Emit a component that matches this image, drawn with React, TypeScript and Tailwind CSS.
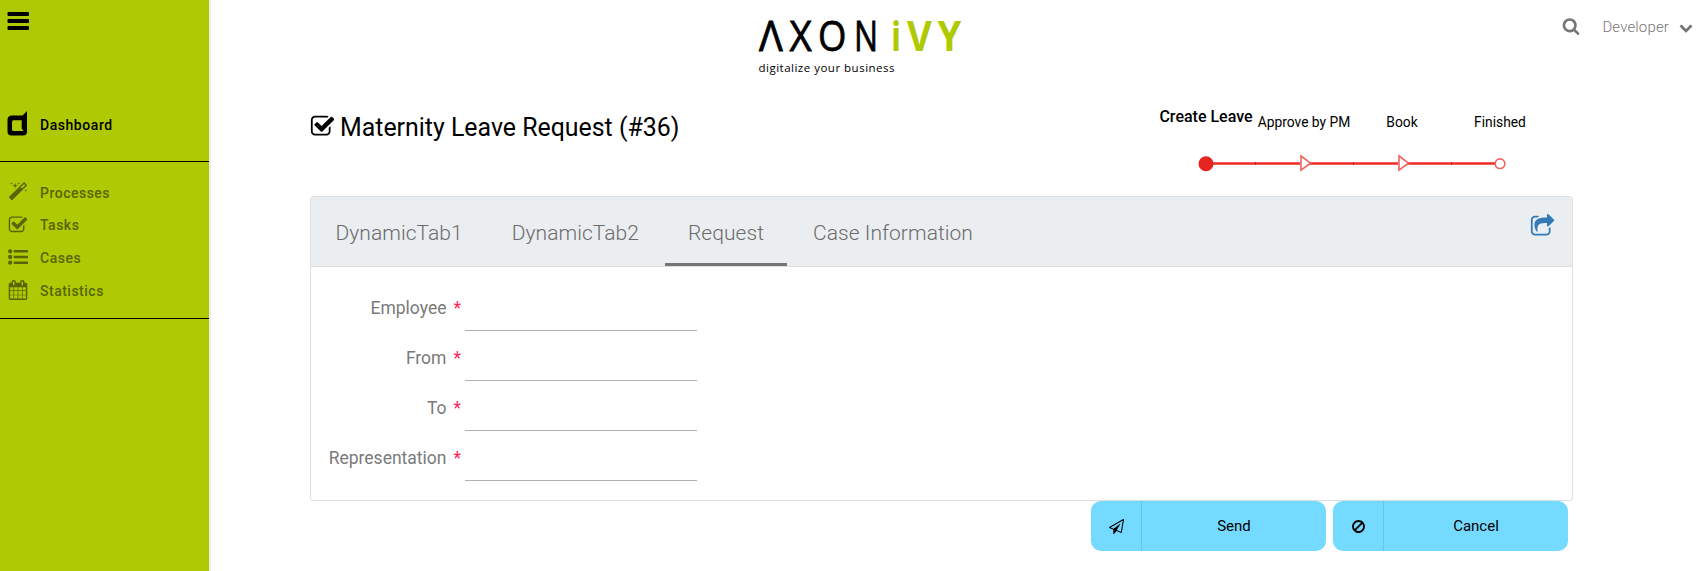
import React from "react";

const PATHS = {
  check:
    "M1472 930v318q0 119-84.5 203.5t-203.5 84.5h-832q-119 0-203.5-84.5t-84.5-203.5v-832q0-119 84.5-203.5t203.5-84.5h832q63 0 117 25 15 7 18 23 3 17-9 29l-49 49q-10 10-23 10-3 0-9-2-23-6-45-6h-832q-66 0-113 47t-47 113v832q0 66 47 113t113 47h832q66 0 113-47t47-113v-254q0-13 9-22l64-64q10-10 23-10 6 0 12 3 20 8 20 29zm231-489l-814 814q-24 24-57 24t-57-24l-430-430q-24-24-24-57t24-57l110-110q24-24 57-24t57 24l263 263 647-647q24-24 57-24t57 24l110 110q24 24 24 57t-24 57z",
  magic:
    "M1254 581l293-293-107-107-293 293zm447-293q0 27-18 45l-1286 1286q-18 18-45 18t-45-18l-198-198q-18-18-18-45t18-45l1286-1286q18-18 45-18t45 18l198 198q18 18 18 45zm-1351-190l98 30-98 30-30 98-30-98-98-30 98-30 30-98zm350 162l196 60-196 60-60 196-60-196-196-60 196-60 60-196zm930 478l98 30-98 30-30 98-30-98-98-30 98-30 30-98zm-640-640l98 30-98 30-30 98-30-98-98-30 98-30 30-98z",
  list:
    "M0 1408a192 192 0 1 0 384 0a192 192 0 1 0-384 0zM0 896a192 192 0 1 0 384 0a192 192 0 1 0-384 0zM0 384a192 192 0 1 0 384 0a192 192 0 1 0-384 0zM512 1292h1280v232h-1280zM512 780h1280v232h-1280zM512 268h1280v232h-1280z",
  calendar:
    "M192 1664h288v-288h-288v288zm352 0h320v-288h-320v288zm-352-352h288v-320h-288v320zm352 0h320v-320h-320v320zm-352-384h288v-288h-288v288zm736 736h320v-288h-320v288zm-384-736h320v-288h-320v288zm768 736h288v-288h-288v288zm-384-352h320v-320h-320v320zm-352-864v-288q0-13-9.5-22.5t-22.5-9.5h-64q-13 0-22.5 9.5t-9.5 22.5v288q0 13 9.5 22.5t22.5 9.5h64q13 0 22.5-9.5t9.5-22.5zm736 864h288v-320h-288v320zm-384-384h320v-288h-320v288zm384 0h288v-288h-288v288zm32-480v-288q0-13-9.5-22.5t-22.5-9.5h-64q-13 0-22.5 9.5t-9.5 22.5v288q0 13 9.5 22.5t22.5 9.5h64q13 0 22.5-9.5t9.5-22.5zm384-64v1280q0 52-38 90t-90 38h-1408q-52 0-90-38t-38-90v-1280q0-52 38-90t90-38h128v-96q0-66 47-113t113-47h64q66 0 113 47t47 113v96h384v-96q0-66 47-113t113-47h64q66 0 113 47t47 113v96h128q52 0 90 38t38 90z",
  plane:
    "M1764 11q33 24 27 64l-256 1536q-5 29-32 45-14 8-31 8-11 0-24-5l-527-215-298 327q-18 21-47 21-14 0-23-4-19-7-30-23.5t-11-36.5v-452l-472-193q-37-14-40-55-3-39 32-59l1664-960q35-21 68 2zm-342 1499l221-1323-1434 827 336 137 863-639-478 797z",
  ban: "M1440 893q0-161-87-295l-754 753q137 89 297 89 111 0 211.5-43.5t173.5-116.5 116-174.5 43-212.5zm-999 299l755-754q-135-91-300-91-148 0-273 73t-198 199-73 274q0 162 89 299zm1223-299q0 157-61 300t-163.5 246-245 164-298.5 61-298.5-61-245-164-163.5-246-61-300 61-299.5 163.5-245.5 245-164 298.5-61 298.5 61 245 164 163.5 245.5 61 299.5z",
  search:
    "M1216 832q0-185-131.5-316.5t-316.5-131.5-316.5 131.5-131.5 316.5 131.5 316.5 316.5 131.5 316.5-131.5 131.5-316.5zm512 832q0 52-38 90t-90 38q-54 0-90-38l-343-342q-179 124-399 124-143 0-273.5-55.5t-225-150-150-225-55.5-273.5 55.5-273.5 150-225 225-150 273.5-55.5 273.5 55.5 225 150 150 225 55.5 273.5q0 220-124 399l343 343q37 37 37 90z",
  share:
    "M1472 989v259q0 119-84.5 203.5t-203.5 84.5h-832q-119 0-203.5-84.5t-84.5-203.5v-832q0-119 84.5-203.5t203.5-84.5h255q13 0 22.5 9.5t9.5 22.5q0 27-26 32-77 26-133 60-10 4-16 4h-112q-66 0-113 47t-47 113v832q0 66 47 113t113 47h832q66 0 113-47t47-113v-214q0-19 18-29 28-13 54-37 16-16 35-8 21 9 21 31zm237-496l-384 384q-18 19-45 19-12 0-25-5-39-17-39-59v-192h-160q-323 0-438 131-119 137-74 473 3 23-20 34-8 2-12 2-16 0-26-13-10-14-21-31t-39.5-68.5-49.5-99.5-38.5-114-17.5-122q0-49 3.5-91t14-90 28-88 47-81.5 68.5-74 94.5-61.5 124.5-48.5 159.5-30.5 196.5-11h160v-192q0-42 39-59 13-5 25-5 26 0 45 19l384 384q19 19 19 45t-19 45z",
  chevron:
    "M1683 808l-742 741q-19 19-45 19t-45-19l-742-741q-19-19-19-45.5t19-45.5l166-165q19-19 45-19t45 19l531 531 531-531q19-19 45-19t45 19l166 165q19 19 19 45.5t-19 45.5z",
};

function Icon({ name, className }: { name: keyof typeof PATHS; className: string }) {
  return (
    <svg viewBox="0 0 1792 1792" fill="currentColor" className={`shrink-0 ${className}`} aria-hidden="true">
      <path d={PATHS[name]} />
    </svg>
  );
}

const NAV: { icon: keyof typeof PATHS; label: string }[] = [
  { icon: "magic", label: "Processes" },
  { icon: "check", label: "Tasks" },
  { icon: "list", label: "Cases" },
  { icon: "calendar", label: "Statistics" },
];

function Sidebar() {
  return (
    <aside className="h-full w-[211px] shrink-0 border-r-2 border-[#e9eef1] bg-[#afca05]">
      <div className="flex h-[88px] items-start pt-3 pl-[7px]">
        <svg className="h-[18px] w-[22px]" viewBox="0 0 22 18" aria-hidden="true">
          <rect x="0.5" y="0" width="21.5" height="4" rx="1" />
          <rect x="0.5" y="7" width="21.5" height="4" rx="1" />
          <rect x="0.5" y="14" width="21.5" height="4" rx="1" />
        </svg>
      </div>
      <div className="flex h-[74px] items-center border-b border-black pl-[7px] text-[14px] font-medium tracking-[0.55px] text-black">
        <svg className="mt-[-3px] h-[25px] w-[21px]" viewBox="0 0 21 25" aria-hidden="true">
          <path
            fillRule="evenodd"
            d="M5 4.5H15.5L20 0V20.500Q20 24.500 16 24.500H4.500Q0.500 24.500 0.500 20.500V9Q0.500 4.500 5 4.500ZM6.500 9.200Q5 9.200 5 10.700V18.500Q5 20 6.500 20H16.500L14.700 17.800V9.200Z"
          />
        </svg>
        <span className="mt-0.5 ml-3">Dashboard</span>
      </div>
      <nav className="flex h-[157px] flex-col border-b border-black pt-[15px] text-[14px] font-medium tracking-[0.5px] text-[#586502]">
        {NAV.map((n) => (
          <a key={n.label} className="flex h-[32.6px] items-center pl-2">
            <Icon name={n.icon} className="-mt-0.5 h-5 w-5" />
            <span className="ml-3">{n.label}</span>
          </a>
        ))}
      </nav>
    </aside>
  );
}

function Logo() {
  return (
    <svg
      className="h-[60px] w-[210px] overflow-visible font-['Open_Sans','Noto_Sans',sans-serif]"
      viewBox="0 0 210 60"
    >
      <g fontSize="41.5" stroke="#000" strokeWidth="0.8">
        <text transform="translate(1 35) scale(0.95 1)">Λ</text>
        <text transform="translate(31.5 35) scale(0.93 1)">X</text>
        <text transform="translate(60 35) scale(0.88 1)">O</text>
        <text transform="translate(96 35) scale(0.77 1)">N</text>
      </g>
      <g fontSize="41.5" fontWeight="700" fill="#afca05">
        <text transform="translate(133 35) scale(0.8 1)">i</text>
        <text transform="translate(149 35) scale(0.92 1)">V</text>
        <text transform="translate(179.5 35) scale(0.92 1)">Y</text>
      </g>
      <text x="0.5" y="55.5" fontSize="11.5" textLength="136">
        digitalize your business
      </text>
    </svg>
  );
}

const STEPS = ["Create Leave", "Approve by PM", "Book", "Finished"];

function StepMark({ index }: { index: number }) {
  return (
    <svg className="h-5 w-[98px]" viewBox="0 0 98 20" aria-hidden="true">
      {index > 0 && <path d="M0 10.500H45" stroke="#ee2a24" strokeWidth="2.6" />}
      {index < 3 && <path d="M50 10.500H98" stroke="#ee2a24" strokeWidth="2.6" />}
      {index > 0 && <path d="M0 9V12" stroke="#b5171b" strokeWidth="1.500" />}
      {index === 0 && <circle cx="49" cy="10.700" r="7.500" fill="#e52520" />}
      {(index === 1 || index === 2) && (
        <path d="M46 3L55.500 10.200L46 17.200Z" fill="#fff" stroke="#f0625c" strokeWidth="1.600" />
      )}
      {index === 3 && <circle cx="49" cy="10.700" r="4.800" fill="#fff" stroke="#f0625c" strokeWidth="1.600" />}
    </svg>
  );
}

function Steps() {
  return (
    <ol className="flex">
      {STEPS.map((s, i) => (
        <li key={s} className="flex w-[98px] flex-col items-center text-black">
          <span
            className={
              i === 0
                ? "flex h-[49px] items-start pt-[3px] text-[16px] leading-5 font-medium whitespace-nowrap"
                : "flex h-[49px] items-start pt-2 text-[13.8px] leading-5 whitespace-nowrap"
            }
          >
            {s}
          </span>
          <StepMark index={i} />
        </li>
      ))}
    </ol>
  );
}

const TABS = ["DynamicTab1", "DynamicTab2", "Request", "Case Information"];
const FIELDS = ["Employee", "From", "To", "Representation"];

function Panel() {
  return (
    <section className="h-[305px] w-[1263px] rounded-[3px] border border-[#dcdee0] bg-white">
      <div className="flex h-[70px] justify-between border-b border-[#dcdee0] bg-[#eaeef1]">
        <div className="flex gap-[4px] pl-[2px]">
          {TABS.map((t) => (
            <button
              key={t}
              className={`flex items-center border-b-3 px-[22.5px] pt-[7px] text-[21px] font-light tracking-[0.05px] text-[#6b6b6b] ${
                t === "Request" ? "rounded-t-[2px] border-[#757575]" : "border-transparent"
              }`}
            >
              {t}
            </button>
          ))}
        </div>
        <Icon name="share" className="mt-[17px] mr-[17px] h-[25px] w-[25px] text-[#337ab7]" />
      </div>
      <form className="flex flex-col pt-[14px]">
        {FIELDS.map((f) => (
          <div key={f} className="flex h-[50px]">
            <label className="w-[150px] pt-[15px] text-right text-[17.5px] leading-6 whitespace-nowrap text-[#7a7a7a]">
              {f}
              <span className="ml-[7px] text-[#fb2459]">*</span>
            </label>
            <div className="ml-1 h-[50px] w-[232px] border-b border-[#b0b0b0]" />
          </div>
        ))}
      </form>
    </section>
  );
}

function ActionButton({ icon, label }: { icon: keyof typeof PATHS; label: string }) {
  return (
    <button className="flex h-[50px] w-[235px] rounded-[10px] bg-[#74daff] text-[15px] text-black">
      <span className="flex h-full w-[51px] items-center justify-center border-r border-[#67c4e8]">
        <Icon name={icon} className="h-[15px] w-[15px]" />
      </span>
      <span className="flex h-full flex-1 items-center justify-center">{label}</span>
    </button>
  );
}

export default function App() {
  return (
    <div className="flex h-[571px] w-[1708px] overflow-hidden bg-white font-[Roboto,sans-serif]">
      <Sidebar />
      <div className="flex min-w-0 flex-1 flex-col">
        <header className="flex h-[104px] items-start justify-between pt-4 pr-[15px] pl-[547px]">
          <Logo />
          <div className="flex items-center pt-px text-[15px] leading-5 font-light tracking-[0.15px] text-[#757575]">
            <Icon name="search" className="-mt-0.5 mr-px h-[18px] w-[18px]" />
            <span className="ml-[21px]">Developer</span>
            <Icon name="chevron" className="ml-[10px] h-[15px] w-[14px]" />
          </div>
        </header>
        <main className="pl-[99px]">
          <div className="flex h-[92px] w-[1263px] justify-between pr-6">
            <h1 className="flex h-11 items-center text-[24.9px] text-black">
              <Icon name="check" className="mr-[5px] h-[25px] w-[25px]" />
              <span className="mt-[3px]">Maternity Leave Request (#36)</span>
            </h1>
            <Steps />
          </div>
          <Panel />
          <div className="flex w-[1263px] justify-end gap-[7px] pr-[5px]">
            <ActionButton icon="plane" label="Send" />
            <ActionButton icon="ban" label="Cancel" />
          </div>
        </main>
      </div>
    </div>
  );
}
